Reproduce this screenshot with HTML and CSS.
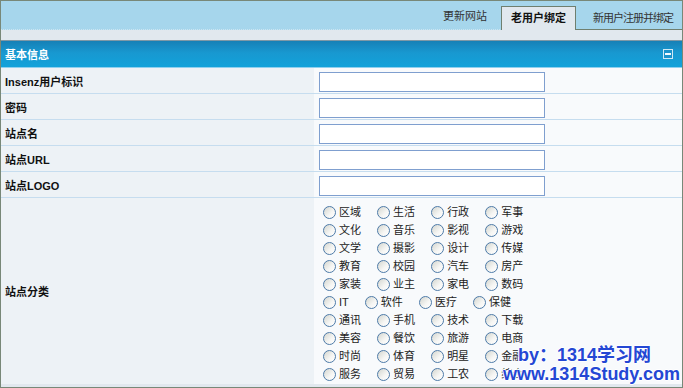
FILE: index.html
```html
<!DOCTYPE html>
<html lang="zh-CN">
<head>
  <meta charset="UTF-8" />
  <title>老用户绑定</title>
  <link rel="stylesheet" href="styles.css">
</head>
<body>
  <div class="page">

    <!-- Tabs -->
    <div class="topbar">
      <a class="tab">更新网站</a>
      <a class="tab active">老用户绑定</a>
      <a class="tab last">新用户注册并绑定</a>
    </div>
    <div class="gap"></div>

    <!-- Basic info panel -->
    <div class="panel-head">
      <span>基本信息</span>
      <svg class="collapse" width="10" height="10" viewBox="0 0 10 10">
        <rect x="0.5" y="0.5" width="9" height="9" fill="#1b93cc" stroke="#cfe9f6" />
        <rect x="2" y="4" width="6" height="2" fill="#f4fbff" />
      </svg>
    </div>

    <div class="row">
      <div class="label">Insenz用户标识</div>
      <div class="field"><input class="text" type="text"></div>
    </div>
    <div class="row">
      <div class="label">密码</div>
      <div class="field"><input class="text" type="password"></div>
    </div>
    <div class="row">
      <div class="label">站点名</div>
      <div class="field"><input class="text" type="text"></div>
    </div>
    <div class="row">
      <div class="label">站点URL</div>
      <div class="field"><input class="text" type="text"></div>
    </div>
    <div class="row">
      <div class="label">站点LOGO</div>
      <div class="field"><input class="text" type="text"></div>
    </div>

    <div class="row cats">
      <div class="label">站点分类</div>
      <div class="field">
        <div class="opts">
          <label class="opt"><input type="radio" name="cat">区域</label>
          <label class="opt"><input type="radio" name="cat">生活</label>
          <label class="opt"><input type="radio" name="cat">行政</label>
          <label class="opt"><input type="radio" name="cat">军事</label>
        </div>
        <div class="opts">
          <label class="opt"><input type="radio" name="cat">文化</label>
          <label class="opt"><input type="radio" name="cat">音乐</label>
          <label class="opt"><input type="radio" name="cat">影视</label>
          <label class="opt"><input type="radio" name="cat">游戏</label>
        </div>
        <div class="opts">
          <label class="opt"><input type="radio" name="cat">文学</label>
          <label class="opt"><input type="radio" name="cat">摄影</label>
          <label class="opt"><input type="radio" name="cat">设计</label>
          <label class="opt"><input type="radio" name="cat">传媒</label>
        </div>
        <div class="opts">
          <label class="opt"><input type="radio" name="cat">教育</label>
          <label class="opt"><input type="radio" name="cat">校园</label>
          <label class="opt"><input type="radio" name="cat">汽车</label>
          <label class="opt"><input type="radio" name="cat">房产</label>
        </div>
        <div class="opts">
          <label class="opt"><input type="radio" name="cat">家装</label>
          <label class="opt"><input type="radio" name="cat">业主</label>
          <label class="opt"><input type="radio" name="cat">家电</label>
          <label class="opt"><input type="radio" name="cat">数码</label>
        </div>
        <div class="opts">
          <label class="opt"><input type="radio" name="cat">IT</label>
          <label class="opt"><input type="radio" name="cat">软件</label>
          <label class="opt"><input type="radio" name="cat">医疗</label>
          <label class="opt"><input type="radio" name="cat">保健</label>
        </div>
        <div class="opts">
          <label class="opt"><input type="radio" name="cat">通讯</label>
          <label class="opt"><input type="radio" name="cat">手机</label>
          <label class="opt"><input type="radio" name="cat">技术</label>
          <label class="opt"><input type="radio" name="cat">下载</label>
        </div>
        <div class="opts">
          <label class="opt"><input type="radio" name="cat">美容</label>
          <label class="opt"><input type="radio" name="cat">餐饮</label>
          <label class="opt"><input type="radio" name="cat">旅游</label>
          <label class="opt"><input type="radio" name="cat">电商</label>
        </div>
        <div class="opts">
          <label class="opt"><input type="radio" name="cat">时尚</label>
          <label class="opt"><input type="radio" name="cat">体育</label>
          <label class="opt"><input type="radio" name="cat">明星</label>
          <label class="opt"><input type="radio" name="cat">金融</label>
        </div>
        <div class="opts">
          <label class="opt"><input type="radio" name="cat">服务</label>
          <label class="opt"><input type="radio" name="cat">贸易</label>
          <label class="opt"><input type="radio" name="cat">工农</label>
          <label class="opt"><input type="radio" name="cat">综合</label>
        </div>
      </div>
    </div>

    <!-- Watermark -->
    <div class="mark">
      <div class="mark-line1">by：1314学习网</div>
      <div>www.1314Study.com</div>
    </div>
  </div>
</body>
</html>
```

FILE: styles.css
```css
body {
  margin: 0;
  font: 11px "Liberation Sans", "Noto Sans CJK SC", sans-serif;
  color: #111;
}

.page {
  position: relative;
  width: 683px;
  height: 388px;
  box-sizing: border-box;
  border: 1px solid #788878;
  background: #e1e8ee;
  overflow: hidden;
}

/* Tabs */
.topbar {
  height: 28px;
  background: #a6d6ec;
  border-bottom: 1px dotted #cbe5f1;
  display: flex;
  justify-content: flex-end;
  align-items: flex-end;
}

.tab {
  box-sizing: border-box;
  height: 24px;
  line-height: 22px;
  padding: 0 14px;
  color: #333;
  cursor: pointer;
}

.tab.active {
  background: #e1e8ee;
  border: 1px solid #6f7f6f;
  border-bottom: none;
  margin-bottom: -1px;
  padding: 0 9px;
  font-weight: bold;
  color: #111;
}

.tab.last {
  border-bottom: 1px solid #6f7f6f;
  margin-bottom: -1px;
  padding: 0 9px 0 17px;
  line-height: 24px;
  letter-spacing: -1px;
}

.gap {
  height: 10px;
}

/* Panel header */
.panel-head {
  height: 26px;
  background: linear-gradient(#1680b6, #1898d0 45%, #12a2da);
  border-top: 1px solid #7f98a6;
  border-bottom: 1px solid #8fd0ee;
  color: #fff;
  font-weight: bold;
  display: flex;
  align-items: center;
  justify-content: space-between;
  padding: 0 9px 0 4px;
}

.collapse {
  display: block;
}

/* Form rows */
.row {
  display: grid;
  grid-template-columns: 313px 1fr;
  border-bottom: 1px solid #c6ddef;
}

.label {
  background: #edf2f6;
  font-weight: bold;
  padding-left: 4px;
  display: flex;
  align-items: center;
}

.field {
  background: #f8fafc;
  padding: 4px 5px 1px;
}

.text {
  display: block;
  width: 226px;
  height: 20px;
  box-sizing: border-box;
  margin: 0;
  border: 1px solid #7f9fcf;
  background: #fff;
}

/* Category radios */
.cats {
  border-bottom: none;
}

.cats .field {
  padding: 5px 9px 1px;
}

.opts {
  height: 18px;
  line-height: 18px;
  white-space: nowrap;
  color: #222;
}

.opt {
  margin-right: 13px;
}

.opt input {
  appearance: none;
  width: 13px;
  height: 13px;
  margin: 0 3px 0 0;
  vertical-align: -3px;
  border: 1px solid #4d7aa8;
  border-radius: 50%;
  background: linear-gradient(135deg, #d3d5cf, #f6f6f4 60%, #fff);
}

/* Watermark over the bottom right corner */
.mark {
  position: absolute;
  left: 502px;
  top: 345px;
  font: bold 18px/19px "Liberation Sans", "Noto Sans CJK SC", sans-serif;
  color: #2447d4;
  text-shadow: 1px 0 #fff, -1px 0 #fff, 0 1px #fff, 0 -1px #fff;
  white-space: nowrap;
}

.mark-line1 {
  padding-left: 15px;
}
```
